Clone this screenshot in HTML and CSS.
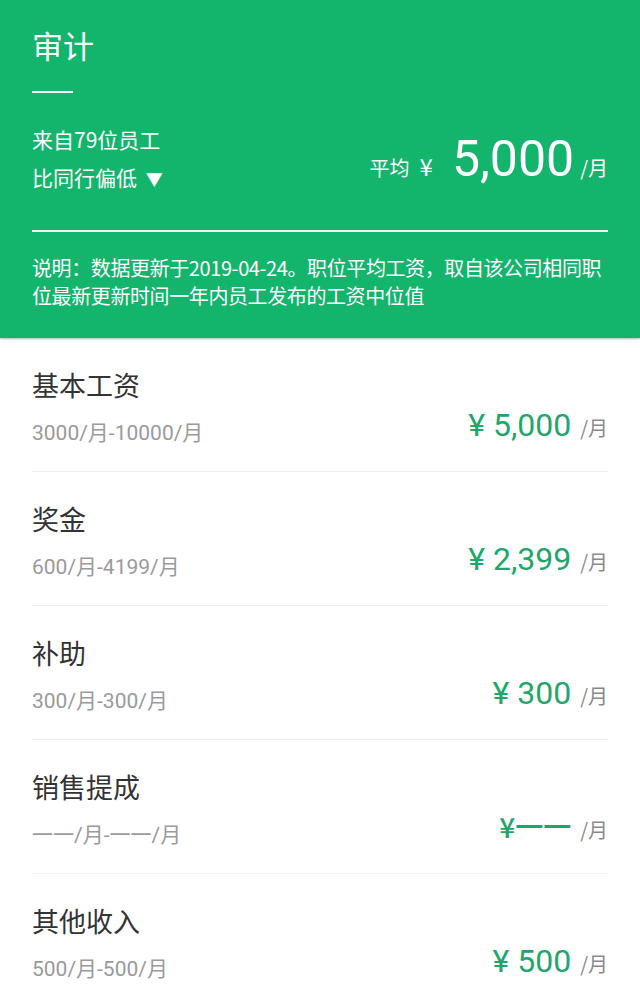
FILE: index.html
```html
<!DOCTYPE html>
<html lang="zh-CN">
<head>
<meta charset="utf-8">
<title>审计</title>
<link rel="stylesheet" href="styles.css">
</head>
<body>
<header class="hero">
  <h1 class="hero-title">审计</h1>
  <div class="hero-rule"></div>
  <div class="hero-info">
    <div class="hero-left">
      <div class="hero-line">来自79位员工</div>
      <div class="hero-line">比同行偏低 <span class="tri">▼</span></div>
    </div>
    <div class="hero-right">
      <span class="avg-label">平均</span>
      <span class="avg-yen">¥</span>
      <span class="avg-num">5,000</span><span class="avg-unit">/月</span>
    </div>
  </div>
  <div class="hero-divider"></div>
  <p class="hero-desc">说明：数据更新于2019-04-24。职位平均工资，取自该公司相同职位最新更新时间一年内员工发布的工资中位值</p>
</header>

<main class="list">
  <div class="row">
    <div class="row-left">
      <div class="row-title">基本工资</div>
      <div class="row-sub">3000/月-10000/月</div>
    </div>
    <div class="row-right"><span class="amt">¥ 5,000</span><span class="unit">/月</span></div>
  </div>
  <div class="row">
    <div class="row-left">
      <div class="row-title">奖金</div>
      <div class="row-sub">600/月-4199/月</div>
    </div>
    <div class="row-right"><span class="amt">¥ 2,399</span><span class="unit">/月</span></div>
  </div>
  <div class="row">
    <div class="row-left">
      <div class="row-title">补助</div>
      <div class="row-sub">300/月-300/月</div>
    </div>
    <div class="row-right"><span class="amt">¥ 300</span><span class="unit">/月</span></div>
  </div>
  <div class="row">
    <div class="row-left">
      <div class="row-title">销售提成</div>
      <div class="row-sub">一一/月-一一/月</div>
    </div>
    <div class="row-right"><span class="amt amt-none">¥一一</span><span class="unit">/月</span></div>
  </div>
  <div class="row">
    <div class="row-left">
      <div class="row-title">其他收入</div>
      <div class="row-sub">500/月-500/月</div>
    </div>
    <div class="row-right"><span class="amt">¥ 500</span><span class="unit">/月</span></div>
  </div>
</main>
</body>
</html>
```

FILE: styles.css
```css
* { box-sizing: border-box; }
html, body { margin: 0; padding: 0; background: #fff; }
body {
  width: 640px;
  font-family: "Noto Sans CJK SC", "Noto Sans", Roboto, sans-serif;
  overflow: hidden;
}

.hero {
  background: #13b46c;
  color: #fff;
  padding: 25px 32px 28px 32px;
  box-shadow: 0 1px 2px rgba(0, 60, 30, 0.35);
  position: relative;
  z-index: 1;
}
.hero-title {
  margin: 0;
  font-size: 31px;
  font-weight: 400;
  line-height: 40px;
}
.hero-rule {
  width: 41px;
  height: 2px;
  background: #fff;
  margin-top: 26px;
}
.hero-info {
  display: flex;
  justify-content: space-between;
  align-items: flex-end;
  margin-top: 32px;
}
.hero-left { display: flex; flex-direction: column; gap: 10px; }
.hero-line { font-size: 21px; line-height: 28px; }
.tri { font-size: 17px; margin-left: 4px; }
.hero-right {
  display: flex;
  align-items: baseline;
  line-height: 50px;
}
.avg-label { font-size: 20px; margin-right: 10px; }
.avg-yen { font-size: 24px; margin-right: 19px; font-family: "Noto Sans CJK SC", sans-serif; }
.avg-num {
  font-family: Roboto, sans-serif;
  font-size: 50px;
}
.avg-unit { font-size: 20px; margin-left: 6px; }
.hero-divider {
  height: 2px;
  background: rgba(255, 255, 255, 0.9);
  margin-top: 37px;
}
.hero-desc {
  margin: 22px 0 0 0;
  font-size: 20px;
  line-height: 28px;
  letter-spacing: -0.4px;
}

.list { padding: 0 32px; }
.row {
  display: flex;
  justify-content: space-between;
  align-items: flex-end;
  padding: 31px 0 24px 0;
  border-bottom: 1px solid #eeeeee;
}
.row-left { display: flex; flex-direction: column; gap: 18px; }
.row-title { font-size: 27px; line-height: 32px; color: #333; }
.row-sub { font-size: 21px; line-height: 28px; color: #9a9a9a; font-family: Roboto, "Noto Sans CJK SC", sans-serif; }
.row-right {
  display: flex;
  align-items: baseline;
  margin-bottom: 1px;
  line-height: 36px;
}
.amt {
  font-family: Roboto, "Noto Sans CJK SC", sans-serif;
  font-size: 32px;
  color: #1ea76b;
}
.amt-none { font-family: "Noto Sans CJK SC", sans-serif; font-size: 28px; font-weight: 500; }
.unit { font-size: 20px; color: #8a8a8a; margin-left: 9px; }
```
